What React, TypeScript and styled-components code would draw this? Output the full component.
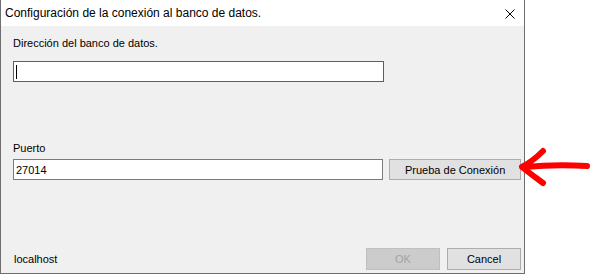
import React from "react";
import styled, { createGlobalStyle } from "styled-components";

const GlobalStyle = createGlobalStyle`
  html, body {
    margin: 0;
    padding: 0;
    background: #fff;
  }
  body {
    font-family: "Liberation Sans", Arial, sans-serif;
    color: #000;
  }
`;

export default function App() {
  return (
    <>
      <GlobalStyle />
      <Screen>
        <Window>
          <TitleBar>
            <Title>Configuración de la conexión al banco de datos.</Title>
            <CloseButton aria-label="Cerrar">
              <svg width="10" height="10" viewBox="0 0 10 10">
                <path d="M0.5 0.5 L9.5 9.5 M9.5 0.5 L0.5 9.5" stroke="#000" strokeWidth="1" fill="none" />
              </svg>
            </CloseButton>
          </TitleBar>
          <Body>
            <Label $top={11}>Dirección del banco de datos.</Label>
            <Field $top={11}>
              <TextBox $focused>
                <Caret />
              </TextBox>
            </Field>
            <Label $top={60}>Puerto</Label>
            <Field $top={4}>
              <TextBox>27014</TextBox>
              <Button $width={132}>Prueba de Conexión</Button>
            </Field>
            <Footer>
              <Status>localhost</Status>
              <Buttons>
                <Button $width={74} $height={22} disabled>
                  OK
                </Button>
                <Button $width={74} $height={22}>
                  Cancel
                </Button>
              </Buttons>
            </Footer>
          </Body>
        </Window>
        <Arrow width="596" height="279" viewBox="0 0 596 279">
          <path
            d="M587 166 Q556 164 524 167 M543 151 Q533 161 522 167 Q532 175 543 183"
            stroke="#ff0000"
            strokeWidth="6"
            strokeLinecap="round"
            strokeLinejoin="round"
            fill="none"
          />
        </Arrow>
      </Screen>
    </>
  );
}

const Screen = styled.div`
  position: relative;
  width: 596px;
  height: 279px;
  overflow: hidden;
`;

const Window = styled.div`
  box-sizing: border-box;
  width: 525px;
  height: 274px;
  display: flex;
  flex-direction: column;
  background: #f0f0f0;
  border: 1px solid #6f6f6f;
  border-top: none;
`;

const TitleBar = styled.div`
  height: 26px;
  flex: none;
  display: flex;
  align-items: center;
  justify-content: space-between;
  background: #fff;
  padding-left: 4px;
`;

const Title = styled.span`
  font-size: 12px;
  line-height: 16px;
`;

const CloseButton = styled.div`
  display: flex;
  width: 10px;
  height: 10px;
  margin-right: 9px;
  margin-top: 1px;
`;

const Body = styled.div`
  flex: 1;
  display: flex;
  flex-direction: column;
  padding: 0 3px 3px 12px;
  font-size: 11px;
`;

const Label = styled.div<{ $top: number }>`
  margin-top: ${(p) => p.$top}px;
  line-height: 13px;
`;

const Field = styled.div<{ $top: number }>`
  margin-top: ${(p) => p.$top}px;
  display: flex;
  align-items: center;
  gap: 6px;
`;

const TextBox = styled.div<{ $focused?: boolean }>`
  box-sizing: border-box;
  width: 371px;
  height: 21px;
  display: flex;
  align-items: center;
  padding-left: 2px;
  background: #fff;
  border: 1px solid ${(p) => (p.$focused ? "#0078d7" : "#7a7a7a")};
  font-size: 11px;
`;

const Caret = styled.span`
  width: 1px;
  height: 14px;
  background: #000;
`;

const Button = styled.button<{ $width: number; $height?: number }>`
  box-sizing: border-box;
  width: ${(p) => p.$width}px;
  height: ${(p) => p.$height ?? 21}px;
  padding: 0;
  background: #e1e1e1;
  border: 1px solid #adadad;
  border-radius: 0;
  font-family: "Liberation Sans", Arial, sans-serif;
  font-size: 11px;
  color: #000;
  &:disabled {
    background: #cccccc;
    border-color: #bfbfbf;
    color: #a3a3a3;
  }
`;

const Footer = styled.div`
  margin-top: auto;
  display: flex;
  align-items: center;
  justify-content: space-between;
`;

const Status = styled.span`
  line-height: 13px;
  margin-left: 1px;
`;

const Buttons = styled.div`
  display: flex;
  gap: 7px;
`;

const Arrow = styled.svg`
  position: absolute;
  left: 0;
  top: 0;
  pointer-events: none;
`;
